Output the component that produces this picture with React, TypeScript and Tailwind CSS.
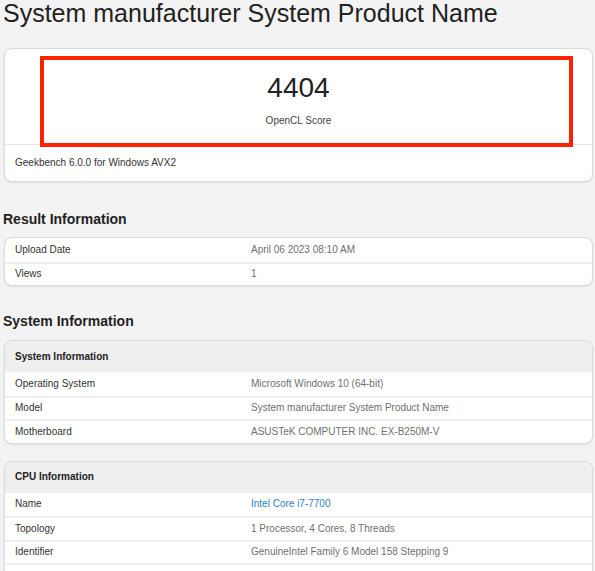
import React from "react";

type Row = { label: string; value: string; link?: boolean };

function InfoRows({ rows }: { rows: Row[] }) {
  return (
    <>
      {rows.map((r, i) => (
        <div
          key={r.label + i}
          className={
            "flex h-[23.5px] items-center text-[10px] leading-none " +
            (i === 0 ? "" : "border-t-2 border-[#efefef]")
          }
        >
          <div className="w-[246px] shrink-0 pl-[10px] text-[#333333]">{r.label}</div>
          <div className={r.link ? "text-[#2f7fc1]" : "text-[#707070]"}>{r.value}</div>
        </div>
      ))}
    </>
  );
}

function Card({ children, className = "" }: { children: React.ReactNode; className?: string }) {
  return (
    <div
      className={
        "ml-[4px] mr-[2px] overflow-hidden rounded-[8px] border border-[#dadada] bg-white shadow-[0_1px_2px_rgba(0,0,0,0.08)] " +
        className
      }
    >
      {children}
    </div>
  );
}

function TableCard({ title, rows, className = "" }: { title: string; rows: Row[]; className?: string }) {
  return (
    <Card className={className}>
      <div className="flex h-[31px] items-center bg-[#efefef] pl-[10px] text-[10px] font-bold leading-none text-[#222222]">
        {title}
      </div>
      <InfoRows rows={rows} />
    </Card>
  );
}

export default function App() {
  return (
    <div
      className="min-h-[571px] w-[595px] overflow-hidden bg-[#f3f3f3]"
      style={{ fontFamily: '"Liberation Sans", Arial, sans-serif' }}
    >
      <h1 className="pl-[3px] text-[25px] font-normal leading-[27px] text-[#222222]">
        System manufacturer System Product Name
      </h1>

      <Card className="relative mt-[21px] overflow-visible">
        <div className="flex h-[95px] flex-col items-center pt-[25px]">
          <div className="text-[28px] leading-[28px] text-[#222222]">4404</div>
          <div className="mt-[14px] text-[10px] leading-[10px] text-[#444444]">OpenCL Score</div>
        </div>
        <div className="flex h-[37px] items-center border-t border-[#e6e6e6] pl-[10px] text-[10px] leading-none text-[#333333]">
          Geekbench 6.0.0 for Windows AVX2
        </div>
        <div className="pointer-events-none absolute left-[35px] top-[7px] h-[91px] w-[533px] border-[4px] border-[#ff2200]" />
      </Card>

      <h2 className="mt-[26.5px] mb-[8.5px] pl-[3px] text-[14px] font-bold leading-[20px] text-[#222222]">
        Result Information
      </h2>
      <Card>
        <InfoRows
          rows={[
            { label: "Upload Date", value: "April 06 2023 08:10 AM" },
            { label: "Views", value: "1" },
          ]}
        />
      </Card>

      <h2 className="mt-[25px] mb-[9px] pl-[3px] text-[14px] font-bold leading-[20px] text-[#222222]">
        System Information
      </h2>
      <TableCard
        title="System Information"
        rows={[
          { label: "Operating System", value: "Microsoft Windows 10 (64-bit)" },
          { label: "Model", value: "System manufacturer System Product Name" },
          { label: "Motherboard", value: "ASUSTeK COMPUTER INC. EX-B250M-V" },
        ]}
      />

      <TableCard
        className="mt-[17px]"
        title="CPU Information"
        rows={[
          { label: "Name", value: "Intel Core i7-7700", link: true },
          { label: "Topology", value: "1 Processor, 4 Cores, 8 Threads" },
          { label: "Identifier", value: "GenuineIntel Family 6 Model 158 Stepping 9" },
          { label: "", value: "" },
        ]}
      />
    </div>
  );
}
